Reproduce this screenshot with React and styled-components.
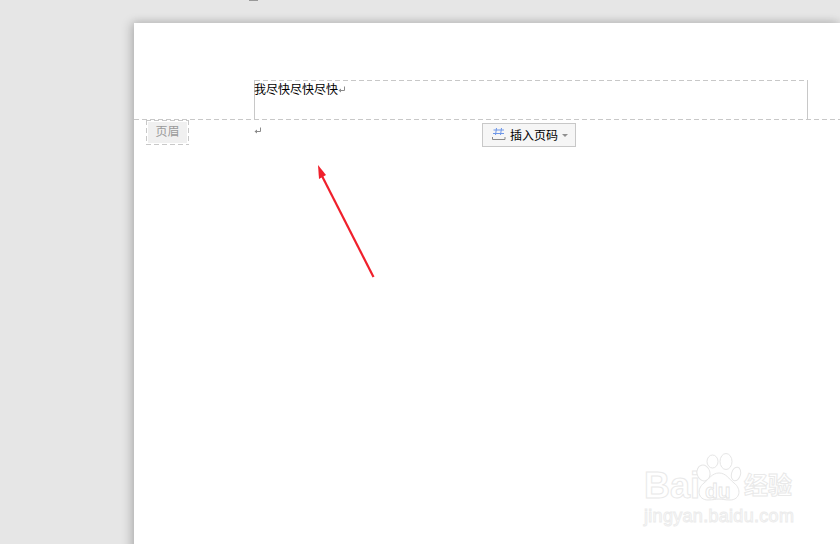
import React from "react";
import styled, { createGlobalStyle } from "styled-components";

const Global = createGlobalStyle`
  html, body { margin: 0; padding: 0; background: #e6e6e6; }
  body { font-family: "Noto Sans CJK SC", "Liberation Sans", sans-serif; }
`;

const hDash = "repeating-linear-gradient(90deg, #c8c8c8 0 5px, transparent 5px 8px)";
const vDash = "repeating-linear-gradient(180deg, #c8c8c8 0 5px, transparent 5px 8px)";

const Workspace = styled.div`
  position: relative;
  width: 840px;
  height: 544px;
  overflow: hidden;
  background: #e6e6e6;
  padding: 23px 0 0 134px;
  box-sizing: border-box;
`;

const RulerTick = styled.div`
  position: absolute;
  left: 249px;
  top: 0;
  width: 9px;
  height: 1px;
  background: #999;
`;

const Page = styled.div`
  height: 560px;
  background: #fff;
  box-shadow: -3px 0 10px rgba(0, 0, 0, 0.2), 0 -2px 7px rgba(0, 0, 0, 0.07);
`;

const HeaderZone = styled.div`
  height: 97px;
  box-sizing: border-box;
  padding: 57px 32px 0 120px;
  background: ${hDash} left bottom / 100% 1px no-repeat;
`;

const HeaderBox = styled.div`
  height: 39px;
  box-sizing: border-box;
  padding-top: 1px;
  background: ${hDash} left top / 100% 1px no-repeat;
  border-left: 1px solid #c8c8c8;
  border-right: 1px solid #c8c8c8;
  display: flex;
  align-items: flex-start;
`;

const HeaderText = styled.span`
  font-size: 12px;
  line-height: 16px;
  color: #000;
  margin-left: -1px;
`;

const Mark = styled.svg`
  width: 8px;
  height: 8px;
  flex: none;
  margin-top: ${p => p.$top}px;
`;

const ToolRow = styled.div`
  display: flex;
  align-items: flex-start;
`;

const HeaderTag = styled.div`
  margin-left: 12px;
  width: 43px;
  height: 25px;
  box-sizing: border-box;
  padding: 2px;
  display: flex;
  background:
    ${hDash} left top / 100% 1px no-repeat,
    ${hDash} left bottom / 100% 1px no-repeat,
    ${vDash} left top / 1px 100% no-repeat,
    ${vDash} right top / 1px 100% no-repeat;
`;

const TagInner = styled.div`
  flex: 1;
  background: #f0f0f0;
  color: #9a9a9a;
  font-size: 12px;
  line-height: 18px;
  text-align: center;
`;

const MarkSlot = styled.div`
  margin-left: 65px;
  width: 228px;
  display: flex;
`;

const PageNumberButton = styled.div`
  margin-top: 3px;
  width: 94px;
  height: 24px;
  box-sizing: border-box;
  border: 1px solid #c8c8c8;
  background: #f6f6f6;
  display: flex;
  align-items: center;
  padding: 0 0 2px 9px;
  color: #000;
  font-size: 12px;
`;

const ButtonIcon = styled.svg`
  width: 14px;
  height: 14px;
  flex: none;
  margin: -1px 4px 0 0;
`;

const Caret = styled.span`
  width: 0;
  height: 0;
  margin: 2px 0 0 4px;
  border-left: 3px solid transparent;
  border-right: 3px solid transparent;
  border-top: 3px solid #909090;
`;

const Arrow = styled.svg`
  position: absolute;
  left: 300px;
  top: 150px;
  width: 90px;
  height: 135px;
`;

const Watermark = styled.div`
  position: absolute;
  left: 644px;
  top: 452px;
  width: 156px;
  height: 76px;
  font-family: "Liberation Sans", "Noto Sans CJK SC", sans-serif;
  color: #fff;
`;

const WatermarkTop = styled.div`
  position: absolute;
  left: 0;
  top: 16px;
  display: flex;
  align-items: center;
  height: 36px;
`;

const WatermarkWord = styled.span`
  font-size: ${p => p.$size}px;
  font-weight: 700;
  line-height: 1;
  color: #fff;
  -webkit-text-stroke: 1px #e9e9e9;
  margin-left: ${p => p.$left || 0}px;
`;

const WatermarkUrl = styled.div`
  position: absolute;
  left: 0;
  top: 54px;
  font-size: 18px;
  letter-spacing: 0.3px;
  line-height: 20px;
  white-space: nowrap;
  color: #fff;
  -webkit-text-stroke: 1px #ececec;
`;

const Paw = styled.svg`
  position: absolute;
  left: 50px;
  top: 0;
  width: 50px;
  height: 50px;
`;

const PawText = styled.span`
  position: absolute;
  left: 61px;
  top: 28px;
  font-size: 21px;
  font-weight: 700;
  line-height: 1;
  color: #fff;
  -webkit-text-stroke: 0.8px #e4e4e4;
`;

const ReturnMark = ({ top }) => (
  <Mark $top={top} viewBox="0 0 8 8">
    <path d="M6.5 0.5V4.5H1.5" fill="none" stroke="#8a8a8a" strokeWidth="1" />
    <path d="M0.5 4.5L3 2.5V6.5Z" fill="#8a8a8a" />
  </Mark>
);

export default function App() {
  return (
    <Workspace>
      <Global />
      <RulerTick />
      <Page>
        <HeaderZone>
          <HeaderBox>
            <HeaderText>我尽快尽快尽快</HeaderText>
            <ReturnMark top={5} />
          </HeaderBox>
        </HeaderZone>
        <ToolRow>
          <HeaderTag>
            <TagInner>页眉</TagInner>
          </HeaderTag>
          <MarkSlot>
            <ReturnMark top={7} />
          </MarkSlot>
          <PageNumberButton>
            <ButtonIcon viewBox="0 0 14 14">
              <path d="M4.5 1L3.5 8M9.5 1L8.5 8M1.5 3H12M1 6.5H12" fill="none" stroke="#6d96e8" strokeWidth="1" />
              <path d="M0.5 10V12.5H13V10" fill="none" stroke="#8a8a8a" strokeWidth="1" />
            </ButtonIcon>
            插入页码
            <Caret />
          </PageNumberButton>
        </ToolRow>
      </Page>
      <Arrow viewBox="0 0 90 135">
        <path d="M73.5 127L21 24" fill="none" stroke="#f0202c" strokeWidth="2.2" />
        <path d="M18 15L26 25L19 29Z" fill="#f0202c" />
      </Arrow>
      <Watermark>
        <WatermarkTop>
          <WatermarkWord $size={36}>Bai</WatermarkWord>
          <WatermarkWord $size={24} $left={44}>经验</WatermarkWord>
        </WatermarkTop>
        <Paw viewBox="0 0 50 50">
          <g fill="#fff" stroke="#e6e6e6" strokeWidth="1">
            <ellipse cx="9.5" cy="21" rx="6.5" ry="8" transform="rotate(-15 9.5 21)" />
            <ellipse cx="18.5" cy="9.5" rx="5.5" ry="6.5" />
            <ellipse cx="32" cy="9.5" rx="6" ry="8" />
            <ellipse cx="42" cy="22" rx="4.5" ry="7" transform="rotate(15 42 22)" />
            <path d="M25 21C32 21 35 27 40 31C48 37 46 48 36 48C31 48 28 47 25 47C22 47 19 48 14 48C4 48 2 37 10 31C15 27 18 21 25 21Z" />
          </g>
        </Paw>
        <PawText>du</PawText>
        <WatermarkUrl>jingyan.baidu.com</WatermarkUrl>
      </Watermark>
    </Workspace>
  );
}
